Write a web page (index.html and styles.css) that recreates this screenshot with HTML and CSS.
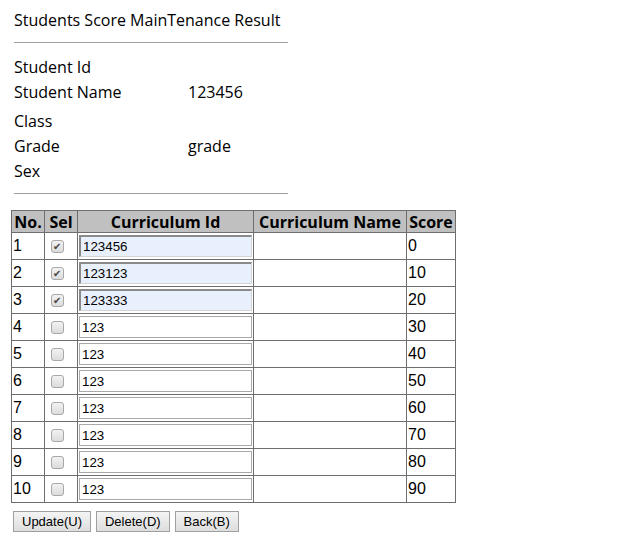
FILE: index.html
```html
<!DOCTYPE html>
<html>
<head>
<meta charset="utf-8">
<link rel="stylesheet" href="styles.css">
</head>
<body>
<div class="page">
  <div class="title">Students Score MainTenance Result</div>
  <div class="rule"></div>
  <div class="info">
    <div class="row"><span class="label">Student Id</span><span class="val"></span></div>
    <div class="row"><span class="label">Student Name</span><span class="val">123456</span></div>
  </div>
  <div class="info info2">
    <div class="row"><span class="label">Class</span><span class="val"></span></div>
    <div class="row"><span class="label">Grade</span><span class="val">grade</span></div>
    <div class="row"><span class="label">Sex</span><span class="val"></span></div>
  </div>
  <div class="rule rule2"></div>
  <table class="grid">
    <colgroup>
      <col class="c-no"><col class="c-sel"><col class="c-id"><col class="c-name"><col class="c-score">
    </colgroup>
    <thead>
      <tr><th>No.</th><th>Sel</th><th>Curriculum Id</th><th>Curriculum Name</th><th>Score</th></tr>
    </thead>
    <tbody>
      <tr><td>1</td><td class="sel"><input type="checkbox" class="cb" checked></td><td><input class="txt auto" value="123456"></td><td></td><td>0</td></tr>
      <tr><td>2</td><td class="sel"><input type="checkbox" class="cb" checked></td><td><input class="txt auto" value="123123"></td><td></td><td>10</td></tr>
      <tr><td>3</td><td class="sel"><input type="checkbox" class="cb" checked></td><td><input class="txt auto" value="123333"></td><td></td><td>20</td></tr>
      <tr><td>4</td><td class="sel"><input type="checkbox" class="cb"></td><td><input class="txt" value="123"></td><td></td><td>30</td></tr>
      <tr><td>5</td><td class="sel"><input type="checkbox" class="cb"></td><td><input class="txt" value="123"></td><td></td><td>40</td></tr>
      <tr><td>6</td><td class="sel"><input type="checkbox" class="cb"></td><td><input class="txt" value="123"></td><td></td><td>50</td></tr>
      <tr><td>7</td><td class="sel"><input type="checkbox" class="cb"></td><td><input class="txt" value="123"></td><td></td><td>60</td></tr>
      <tr><td>8</td><td class="sel"><input type="checkbox" class="cb"></td><td><input class="txt" value="123"></td><td></td><td>70</td></tr>
      <tr><td>9</td><td class="sel"><input type="checkbox" class="cb"></td><td><input class="txt" value="123"></td><td></td><td>80</td></tr>
      <tr><td>10</td><td class="sel"><input type="checkbox" class="cb"></td><td><input class="txt" value="123"></td><td></td><td>90</td></tr>
    </tbody>
  </table>
  <div class="buttons">
    <button class="btn">Update(U)</button>
    <button class="btn">Delete(D)</button>
    <button class="btn">Back(B)</button>
  </div>
</div>
</body>
</html>
```
FILE: styles.css
```css
html, body {
  margin: 0;
  padding: 0;
  background: #fff;
}
.page {
  padding: 8px 0 0 11px;
  font-family: "Open Sans", "Noto Sans", sans-serif;
  font-size: 16px;
  color: #000;
}
.title {
  margin-left: 3px;
  height: 24px;
  line-height: 24px;
  font-size: 16px;
}
.rule {
  margin: 10px 0 0 3px;
  width: 274px;
  height: 0;
  border-top: 1px solid #a0a0a0;
}
.info {
  margin: 12px 0 0 3px;
  display: flex;
  flex-direction: column;
}
.info2 {
  margin-top: 4px;
}
.row {
  display: flex;
  height: 25px;
  line-height: 25px;
}
.label {
  width: 174px;
}
.rule2 {
  margin-top: 9px;
}
.grid {
  margin-top: 16px;
  border-collapse: collapse;
  border: 1px solid #6e6e6e;
  font-family: "Liberation Sans", Arial, sans-serif;
  font-size: 16px;
}
.c-no { width: 33px; }
.c-sel { width: 33px; }
.c-id { width: 176px; }
.c-name { width: 153px; }
.c-score { width: 49px; }
.grid th {
  background: #c0c0c0;
  font-family: "Open Sans", "Noto Sans", sans-serif;
  font-weight: bold;
  font-size: 16px;
  height: 21px;
  padding: 0 1px;
  border: 1px solid #6e6e6e;
  line-height: 20px;
  white-space: nowrap;
}
.grid td {
  border: 1px solid #6e6e6e;
  height: 26px;
  padding: 0 1px;
  text-align: left;
  vertical-align: middle;
}
.grid td.sel {
  padding-left: 6px;
}
.cb {
  appearance: none;
  -webkit-appearance: none;
  margin: 0;
  width: 13px;
  height: 13px;
  border: 1px solid #a8a8a8;
  border-radius: 3px;
  background: linear-gradient(#f2f2f2, #dcdcdc);
  display: block;
  position: relative;
}
.cb:checked::after {
  content: "\2714";
  position: absolute;
  left: 1px;
  top: -1px;
  font-size: 10px;
  color: #444;
  line-height: 14px;
}
.txt {
  box-sizing: border-box;
  width: 173px;
  height: 22px;
  margin: 0;
  padding: 1px 2px;
  border: 1px solid #a9a9a9;
  font-family: "Liberation Sans", Arial, sans-serif;
  font-size: 13.33px;
  color: #000;
  background: #fff;
  display: block;
}
.txt.auto {
  background: #e8f0fe;
  border-top: 2px solid #8a8a8a;
  border-left: 2px solid #8a8a8a;
  border-right: 1px solid #d4d4d4;
  border-bottom: 1px solid #d4d4d4;
}
.buttons {
  display: flex;
  gap: 5px;
  margin: 8px 0 0 2px;
}
.btn {
  height: 21px;
  padding: 0 8px;
  border: 1px solid #a0a0a0;
  border-radius: 0;
  background: linear-gradient(#f4f4f4, #dedede);
  font-family: "Liberation Sans", Arial, sans-serif;
  font-size: 13px;
  color: #000;
}
```
